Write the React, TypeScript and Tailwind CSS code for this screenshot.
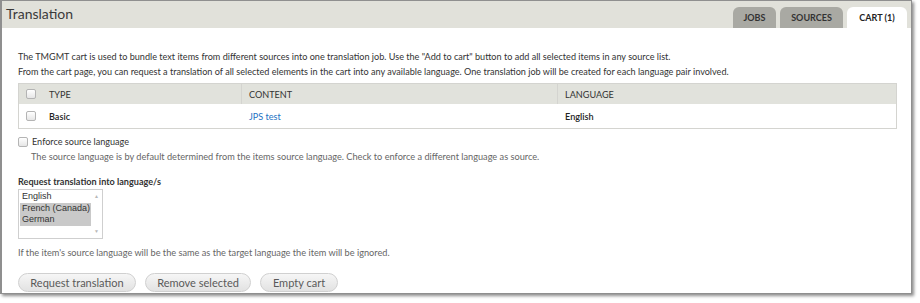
import React from "react";

const TABS = [
  { label: "JOBS", active: false, w: "w-[43px]" },
  { label: "SOURCES", active: false, w: "w-[63px]" },
  { label: "CART (1)", active: true, w: "w-[60px]" },
];

function Checkbox() {
  return (
    <span className="inline-block w-[10px] h-[10px] rounded-[2px] border border-[#b4b4b4] bg-gradient-to-b from-white to-[#e6e6e6]" />
  );
}

function PillButton({ label, w }: { label: string; w: string }) {
  return (
    <button
      className={`${w} h-[19px] rounded-full border border-[#d0d0d0] bg-gradient-to-b from-[#f6f6f6] to-[#e2e2e2] text-[11px] text-[#5a5a5a] leading-none`}
    >
      {label}
    </button>
  );
}

export default function App() {
  return (
    <div className="w-[920px] h-[303px] bg-white font-['Lato',sans-serif]">
      <div className="w-[912px] h-[294px] border-l-2 border-t border-r border-b border-[#8f8f8f] shadow-[2px_2px_3px_rgba(0,0,0,0.45)] flex flex-col">
        {/* header band */}
        <div className="h-[27px] bg-[#e1e1da] flex items-end justify-between pl-[4px] pr-[4px] shrink-0">
          <h1 className="self-center text-[14px] text-[#3a3a3a] leading-none pb-[1px]">Translation</h1>
          <div className="flex items-end gap-[4px]">
            {TABS.map((t) => (
              <div
                key={t.label}
                className={`${t.w} h-[21px] rounded-t-[6px] flex items-center justify-center text-[9px] font-bold ${
                  t.active ? "bg-white text-[#222]" : "bg-[#a9a9a3] text-[#333]"
                }`}
              >
                {t.label}
              </div>
            ))}
          </div>
        </div>

        <div className="pl-[16px] pr-[14px] pt-[21px] text-[9.1px] text-[#333] leading-[15px]">
          <p>
            The TMGMT cart is used to bundle text items from different sources into one translation job. Use the "Add to cart" button to add all selected items in any source list.
          </p>
          <p>
            From the cart page, you can request a translation of all selected elements in the cart into any available language. One translation job will be created for each language pair involved.
          </p>

          {/* cart table */}
          <div className="mt-[4px] border border-[#d4d4d0]">
            <div className="grid grid-cols-[22px_200px_316px_1fr] h-[20px] bg-[#e1e2dc] text-[#333]">
              <div className="flex items-center pl-[7px]"><Checkbox /></div>
              <div className="flex items-center pl-[8px]">TYPE</div>
              <div className="flex items-center pl-[7px] border-l border-[#d4d4d0]">CONTENT</div>
              <div className="flex items-center pl-[7px] border-l border-[#d4d4d0]">LANGUAGE</div>
            </div>
            <div className="grid grid-cols-[22px_200px_316px_1fr] h-[24px] bg-white font-semibold">
              <div className="flex items-center pl-[7px]"><Checkbox /></div>
              <div className="flex items-center pl-[8px] text-[#222]">Basic</div>
              <div className="flex items-center pl-[8px] font-normal text-[#1e72c4]">JPS test</div>
              <div className="flex items-center pl-[8px] text-[#222]">English</div>
            </div>
          </div>

          {/* enforce source */}
          <div className="mt-[5px] flex items-center gap-[4px]">
            <Checkbox />
            <span className="text-[#333]">Enforce source language</span>
          </div>
          <p className="pl-[13px] text-[9.2px] text-[#666]">
            The source language is by default determined from the items source language. Check to enforce a different language as source.
          </p>

          {/* target languages */}
          <div className="mt-[10px] font-bold text-[#333]">Request translation into language/s</div>
          <div className="w-[85px] h-[50px] border border-[#cfcfcf] flex font-['Liberation_Sans',sans-serif] text-[9px] text-[#333] leading-[11.5px]">
            <div className="flex-1 pt-[1px] pl-[1px] whitespace-nowrap overflow-hidden">
              <div className="pl-[2px]">English</div>
              <div className="pl-[2px] bg-[#c9c9c9]">French (Canada)</div>
              <div className="pl-[2px] bg-[#c9c9c9]">German</div>
            </div>
            <div className="w-[11px] flex flex-col justify-between items-center py-[4px] text-[5px] leading-none text-[#b8b8b8]">
              <span>▲</span>
              <span>▼</span>
            </div>
          </div>
          <p className="mt-[6px] text-[9.2px] text-[#666]">
            If the item's source language will be the same as the target language the item will be ignored.
          </p>

          {/* actions */}
          <div className="mt-[13px] flex gap-[9px]">
            <PillButton label="Request translation" w="w-[118px]" />
            <PillButton label="Remove selected" w="w-[106px]" />
            <PillButton label="Empty cart" w="w-[78px]" />
          </div>
        </div>
      </div>
    </div>
  );
}
